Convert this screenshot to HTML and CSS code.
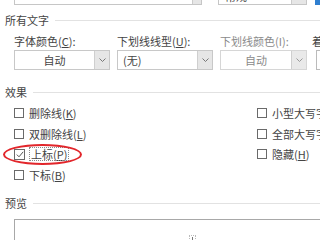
FILE: index.html
```html
<!DOCTYPE html>
<html lang="zh-CN">
<head>
    <meta charset="UTF-8">
    <meta name="viewport" content="width=device-width, initial-scale=1.0">
    <title>字体</title>
    <link rel="stylesheet" href="styles.css">
</head>
<body>
    <div class="page">
        <div class="top-row">
            <div class="box box-wide"><span class="arrow"></span></div>
            <div class="box box-mid"><span class="val">常规</span><span class="arrow"></span></div>
            <div class="box box-blue"></div>
        </div>

        <div class="group-title">所有文字</div>
        <div class="fields">
            <div class="field">
                <div class="label">字体颜色(<u>C</u>):</div>
                <div class="select center">
                    <span class="val">自动</span>
                    <span class="arrow"><svg width="7" height="4" viewBox="0 0 7 4"><path d="M0.5 0.5 L3.5 3.5 L6.5 0.5" fill="none" stroke="#777" stroke-width="1"/></svg></span>
                </div>
            </div>
            <div class="field">
                <div class="label">下划线线型(<u>U</u>):</div>
                <div class="select">
                    <span class="val">(无)</span>
                    <span class="arrow"><svg width="7" height="4" viewBox="0 0 7 4"><path d="M0.5 0.5 L3.5 3.5 L6.5 0.5" fill="none" stroke="#777" stroke-width="1"/></svg></span>
                </div>
            </div>
            <div class="field field-narrow disabled">
                <div class="label">下划线颜色(I):</div>
                <div class="select center">
                    <span class="val">自动</span>
                    <span class="arrow"><svg width="7" height="4" viewBox="0 0 7 4"><path d="M0.5 0.5 L3.5 3.5 L6.5 0.5" fill="none" stroke="#999" stroke-width="1"/></svg></span>
                </div>
            </div>
            <div class="field field-cut">
                <div class="label">着重号(·):</div>
                <div class="select select-cut"><span class="val">(无)</span></div>
            </div>
        </div>

        <div class="group-title">效果</div>
        <div class="effects">
            <label class="check"><span class="box-check"></span>删除线(<u>K</u>)</label>
            <label class="check"><span class="box-check"></span>小型大写字母(<u>M</u>)</label>
            <label class="check"><span class="box-check"></span>双删除线(<u>L</u>)</label>
            <label class="check"><span class="box-check"></span>全部大写字母(<u>A</u>)</label>
            <label class="check"><span class="box-check checked"><svg width="8" height="7" viewBox="0 0 8 7"><path d="M0.8 3.6 L3 5.8 L7.2 0.8" fill="none" stroke="#555" stroke-width="1"/></svg></span><span class="focus">上标(<u>P</u>)</span></label>
            <label class="check"><span class="box-check"></span>隐藏(<u>H</u>)</label>
            <label class="check"><span class="box-check"></span>下标(<u>B</u>)</label>
        </div>

        <div class="group-title">预览</div>
        <div class="preview">
            <span class="mark"></span>
        </div>

        <div class="circle"></div>
    </div>
</body>
</html>
```

FILE: styles.css
```css
body {
    margin: 0;
    background: #fff;
    font-family: "Noto Sans CJK SC", "Noto Sans", sans-serif;
    font-size: 11px;
    color: #444;
    width: 320px;
    height: 240px;
    overflow: hidden;
}
u {
    text-decoration: underline;
    text-underline-offset: 1px;
}
.page {
    position: relative;
    width: 380px;
}

/* rest of the previous row, only the bottom is visible */
.top-row {
    display: flex;
    align-items: flex-end;
    height: 5px;
    overflow: hidden;
    padding-left: 14px;
    gap: 16px;
}
.box {
    position: relative;
    height: 20px;
    border: 1px solid #c6c6c6;
    box-sizing: border-box;
    flex-shrink: 0;
    display: flex;
    justify-content: flex-end;
}
.box .val {
    position: absolute;
    left: 6px;
    top: 2px;
}
.box .arrow {
    width: 8px;
    background: #e6e6e6;
    border-left: 1px solid #ccc;
}
.box-wide {
    width: 188px;
}
.box-mid {
    width: 89px;
}
.box-mid .arrow {
    width: 14px;
}
.box-blue {
    width: 8px;
    height: 20px;
    background: #2f7fd0;
    border: 0;
    margin-left: -8px;
    margin-bottom: -1px;
}

.group-title {
    display: flex;
    align-items: center;
    height: 14px;
    line-height: 14px;
    padding-left: 5px;
    color: #444;
}
.group-title::after {
    content: "";
    flex: 1;
    height: 1px;
    background: #e2e2e2;
    margin-left: 6px;
}
.top-row + .group-title {
    margin-top: 8px;
}

.fields {
    display: flex;
    gap: 7px;
    padding-left: 14px;
    margin-top: 7px;
}
.field {
    width: 96px;
    flex-shrink: 0;
}
.field-narrow {
    width: 87px;
}
.field-cut {
    width: 60px;
}
.label {
    height: 14px;
    line-height: 14px;
    margin-bottom: 2px;
    white-space: nowrap;
}
.select {
    display: flex;
    height: 20px;
    border: 1px solid #c8c8c8;
    box-sizing: border-box;
}
.select .val {
    flex: 1;
    line-height: 18px;
    padding-left: 5px;
}
.select.center .val {
    text-align: center;
    padding-left: 0;
}
.select .arrow {
    width: 14px;
    background: #e6e6e6;
    border-left: 1px solid #cfcfcf;
    display: flex;
    align-items: center;
    justify-content: center;
}
.field-cut .label {
    margin-left: -2px;
}
.select-cut {
    margin-left: 2px;
    border-color: #bbb;
}
.disabled {
    color: #8a8a8a;
}
.disabled .select {
    border-color: #d6d6d6;
}
.disabled .arrow {
    background: #e9e9e9;
}

.fields + .group-title {
    margin-top: 15px;
}

.effects {
    display: grid;
    grid-template-columns: 243px auto;
    grid-auto-rows: 20.6px;
    padding-left: 14px;
    padding-top: 4px;
}
.check {
    display: flex;
    align-items: center;
    white-space: nowrap;
}
.box-check {
    width: 10px;
    height: 10px;
    border: 1px solid #6a6a6a;
    box-sizing: border-box;
    margin-right: 5px;
    display: flex;
    align-items: center;
    justify-content: center;
    flex-shrink: 0;
}
.box-check.checked {
    width: 11px;
    height: 11px;
}
.focus {
    outline: 1px dotted #8a8a8a;
    padding: 0 1px;
    line-height: 12px;
}

.effects + .group-title {
    margin-top: 11px;
}

.preview {
    margin-top: 9px;
    margin-left: 14px;
    width: 356px;
    height: 60px;
    border: 1px solid #a8a8a8;
    border-right: 0;
    box-sizing: border-box;
    text-align: center;
    padding-top: 10px;
}
.mark {
    display: inline-block;
    width: 5px;
    height: 6px;
    border: 1px dotted #bbb;
    position: relative;
}
.mark::after {
    content: "";
    position: absolute;
    left: 2px;
    top: 1px;
    width: 1px;
    height: 4px;
    background: #777;
}

.circle {
    position: absolute;
    left: 3px;
    top: 144px;
    width: 79px;
    height: 21px;
    border: 2px solid #e2262b;
    border-radius: 50%;
    box-sizing: border-box;
}
```
